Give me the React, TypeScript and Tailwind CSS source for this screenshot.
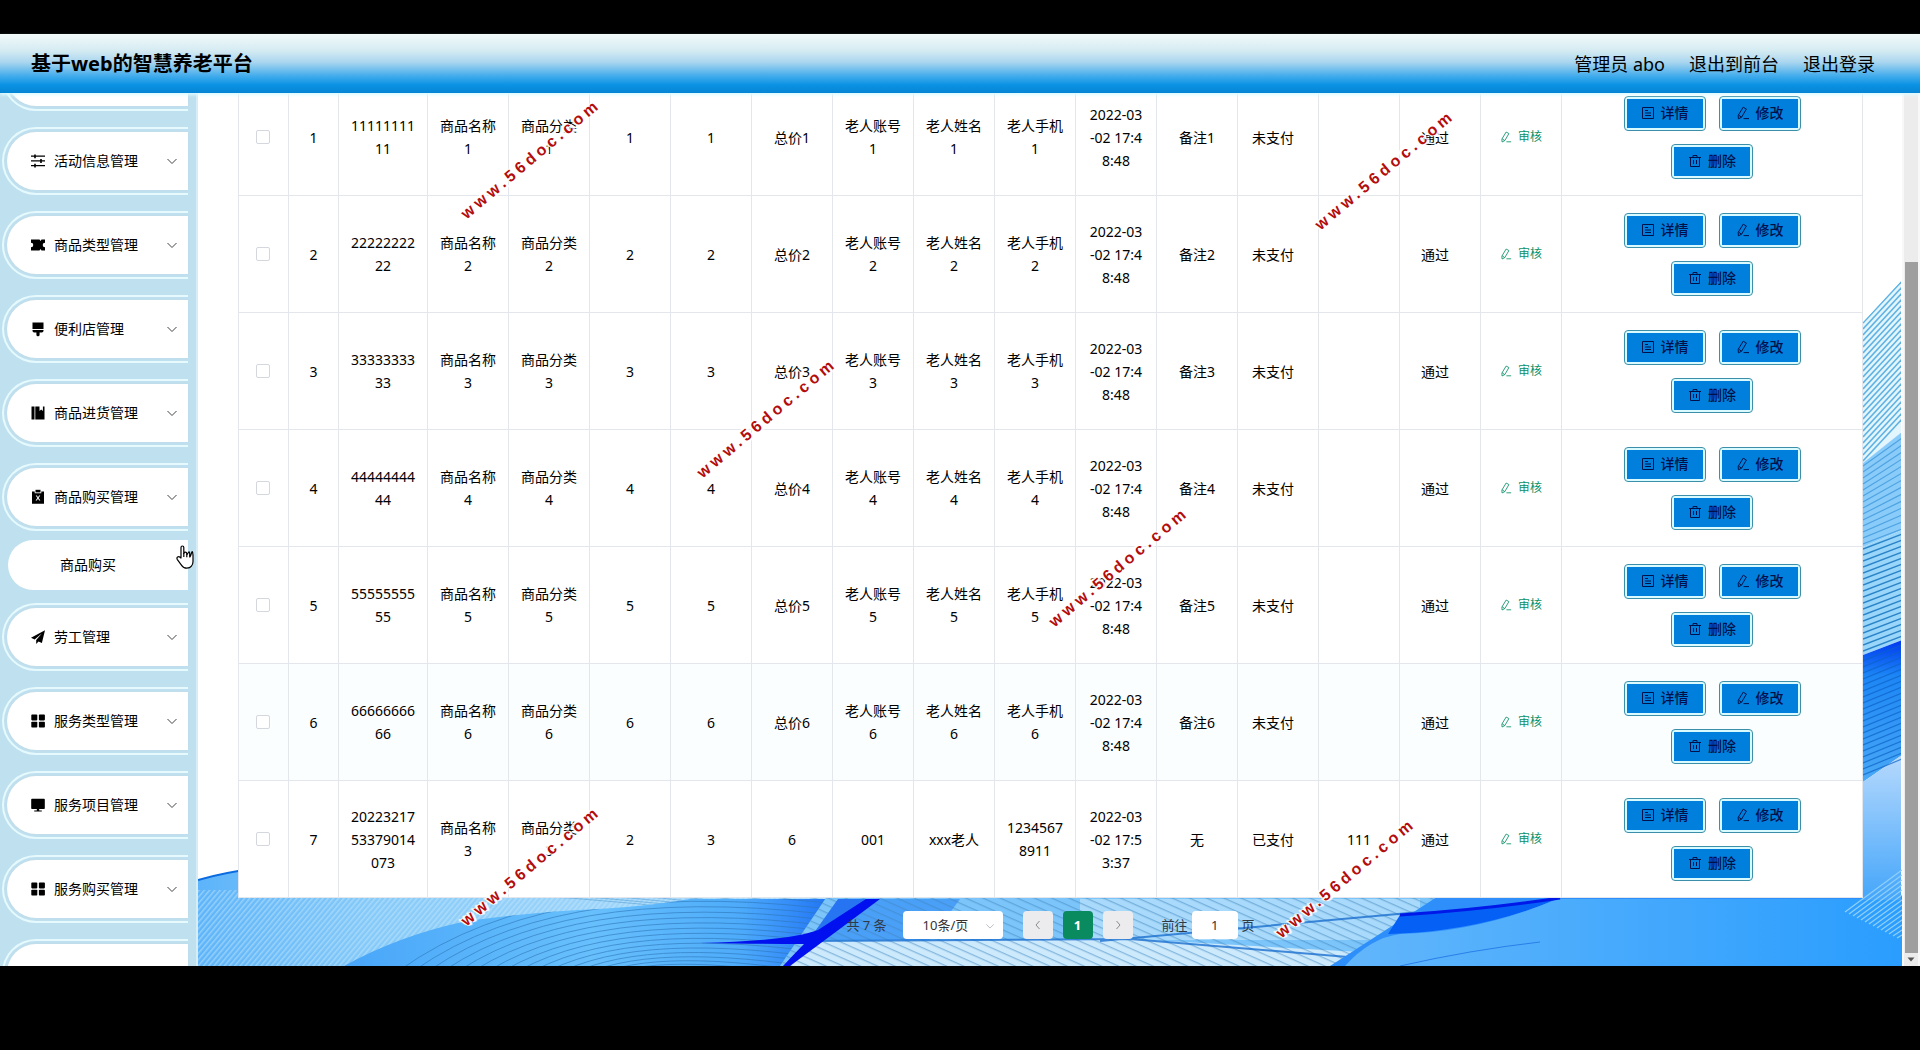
import React from 'react';

interface Purchase {
  orderNo: string;
  name: string;
  category: string;
  price: string;
  count: string;
  total: string;
  account: string;
  elder: string;
  phone: string;
  time: string;
  remark: string;
  paid: string;
  reply: string;
  status: string;
}

interface MenuEntry {
  label: string;
  icon: React.ReactNode;
  children?: string[];
}

const samplePurchase = (n: number): Purchase => ({
  orderNo: String(n).repeat(10),
  name: `商品名称${n}`,
  category: `商品分类${n}`,
  price: String(n),
  count: String(n),
  total: `总价${n}`,
  account: `老人账号${n}`,
  elder: `老人姓名${n}`,
  phone: `老人手机${n}`,
  time: '2022-03\n-02 17:4\n8:48',
  remark: `备注${n}`,
  paid: '未支付',
  reply: '',
  status: '通过',
});

const purchases: Purchase[] = [
  ...[1, 2, 3, 4, 5, 6].map(samplePurchase),
  {
    orderNo: '2022321753379014073',
    name: '商品名称3',
    category: '商品分类3',
    price: '2',
    count: '3',
    total: '6',
    account: '001',
    elder: 'xxx老人',
    phone: '12345678911',
    time: '2022-03\n-02 17:5\n3:37',
    remark: '无',
    paid: '已支付',
    reply: '111',
    status: '通过',
  },
];

const columns: (keyof Purchase)[] = [
  'orderNo', 'name', 'category', 'price', 'count', 'total', 'account',
  'elder', 'phone', 'time', 'remark', 'paid', 'reply', 'status',
];

/* Icons */
const MenuIcon = ({ children }: { children: React.ReactNode }) => (
  <svg viewBox="0 0 16 16" className="w-4 h-4 shrink-0" fill="currentColor" aria-hidden="true">{children}</svg>
);

const SlidersIcon = () => (
  <MenuIcon>
    <path d="M1 2.6h14v1.2H1zM1 7.3h14v1.2H1zM1 12h14v1.2H1z" />
    <path d="M4.2 1.4h1.6v3.8H4.2zM10.2 6.1h1.6v3.8h-1.6zM4.2 10.8h1.6v3.8H4.2z" />
  </MenuIcon>
);

const TicketIcon = () => (
  <MenuIcon>
    <path d="M1 2.5h8.5l1 1.4 1-1.4H15v3.2a2.3 2.3 0 0 0 0 4.6v3.2h-3.5l-1-1.4-1 1.4H1v-3.2a2.3 2.3 0 0 0 0-4.6z" />
  </MenuIcon>
);

const BrushIcon = () => (
  <MenuIcon>
    <path d="M2.5 1.5h11V8h-11zM2.5 9h11v.8q0 1.7-1.7 1.7H9.6v2.2a1.6 1.6 0 0 1-3.2 0v-2.2H4.2q-1.7 0-1.7-1.7z" />
  </MenuIcon>
);

const NotebookIcon = () => (
  <MenuIcon>
    <path d="M1.5 1.5h3v13h-3zM5.3 1.5h4.2V6l1.7-1.4L12.9 6V1.5h1.6v13H5.3z" />
  </MenuIcon>
);

const ClipboardIcon = () => (
  <MenuIcon>
    <path d="M5.5.8h5v2.6h-5z" />
    <path fillRule="evenodd" d="M2 2.4h2.7v1.8h6.6V2.4H14v12.4H2zM5.7 6.6 7.4 9l-1.8 2.6h1.2L8 9.8l1.2 1.8h1.2L8.6 9l1.7-2.4H9.1L8 8.2 6.9 6.6z" />
  </MenuIcon>
);

const PlaneIcon = () => (
  <MenuIcon>
    <path d="M15 1.2 1 8.8l3.6 1.6 7.2-6L6.2 11v3.9l2.3-2.4 3.4 1.5z" />
  </MenuIcon>
);

const GridIcon = () => (
  <MenuIcon>
    <rect x="1.3" y="1.6" width="6" height="5.8" rx=".8" />
    <rect x="8.9" y="1.6" width="6" height="5.8" rx=".8" />
    <rect x="1.3" y="8.8" width="6" height="5.8" rx=".8" />
    <rect x="8.9" y="8.8" width="6" height="5.8" rx=".8" />
  </MenuIcon>
);

const MonitorIcon = () => (
  <MenuIcon>
    <path d="M2 1.8h12q.8 0 .8.8v8.6q0 .8-.8.8H2q-.8 0-.8-.8V2.6q0-.8.8-.8zM6.8 12h2.4v1.4h2.6v1H4.2v-1h2.6z" />
  </MenuIcon>
);

const Chevron = ({ className, d = 'M1.5 4 6 8.5 10.5 4' }: { className: string; d?: string }) => (
  <svg viewBox="0 0 12 12" className={className} fill="none" stroke="currentColor" strokeWidth="1" aria-hidden="true">
    <path d={d} />
  </svg>
);

const DetailIcon = () => (
  <svg viewBox="0 0 14 14" className="w-3.5 h-3.5" fill="none" stroke="currentColor" strokeWidth="1" aria-hidden="true">
    <path d="M1.5 1.5h11v11h-11zM4 4.5h3M4 7h6M4 9.5h6" />
  </svg>
);

const EditIcon = ({ className }: { className: string }) => (
  <svg viewBox="0 0 14 14" className={className} fill="none" stroke="currentColor" strokeWidth="1" aria-hidden="true">
    <path d="M7.2 1.2 10.4 3 5.6 11.2 2.4 12.8 2.2 9.4zM2.6 9.2 5.6 11.2M7.5 12.6H13" />
  </svg>
);

const TrashIcon = () => (
  <svg viewBox="0 0 14 14" className="w-3.5 h-3.5" fill="none" stroke="currentColor" strokeWidth="1" aria-hidden="true">
    <path d="M1 3.5h12M2.5 3.5v9h9v-9M5 3.5v-2h4v2M5.5 6v4M8.5 6v4" />
  </svg>
);

const menu: MenuEntry[] = [
  { label: '', icon: null },
  { label: '活动信息管理', icon: <SlidersIcon /> },
  { label: '商品类型管理', icon: <TicketIcon /> },
  { label: '便利店管理', icon: <BrushIcon /> },
  { label: '商品进货管理', icon: <NotebookIcon /> },
  { label: '商品购买管理', icon: <ClipboardIcon />, children: ['商品购买'] },
  { label: '劳工管理', icon: <PlaneIcon /> },
  { label: '服务类型管理', icon: <GridIcon /> },
  { label: '服务项目管理', icon: <MonitorIcon /> },
  { label: '服务购买管理', icon: <GridIcon /> },
  { label: '', icon: null },
];

const Sidebar = () => (
  <nav className="w-[198px] shrink-0 overflow-hidden bg-[#bfe0ef] border-r-2 border-[#d6edf6] pl-0.5">
    <ul className="-mt-[50px]">
      {menu.map((entry, i) => (
        <li key={i}>
          <div className={`w-[186px] h-[68px] border-2 border-r-0 border-[#e6fafe] rounded-l-[34px] p-[3px] pr-0 ${entry.children ? 'mb-[9px]' : 'mb-4'}`}>
            <button
              aria-label={entry.label || '菜单'}
              className="w-full h-full flex items-center rounded-l-[30px] bg-white pl-[23px] pr-2.5 text-sm text-black shadow-[0_0_2px_#c3d3e0]"
            >
              {entry.label && (
                <>
                  {entry.icon}
                  <span className="ml-2 flex-1 text-left">{entry.label}</span>
                  <Chevron className="w-3 h-3 text-[#444]" />
                </>
              )}
            </button>
          </div>
          {entry.children?.map(child => (
            <a key={child} href="#" className="ml-1.5 mb-[13px] w-[180px] h-[50px] flex items-center rounded-l-[25px] bg-white pl-[52px] text-sm text-black">
              {child}
            </a>
          ))}
        </li>
      ))}
    </ul>
  </nav>
);

/* Blue wave wallpaper behind the table */
const range = (n: number) => Array.from({ length: n }, (_, i) => i);

const Wallpaper = () => (
  <svg viewBox="198 93 1704 873" preserveAspectRatio="none" className="absolute inset-0 w-full h-full" aria-hidden="true">
    <defs>
      <pattern id="hatch" width="4" height="4" patternUnits="userSpaceOnUse" patternTransform="rotate(40)">
        <rect width="1.5" height="4" fill="#c9e9fc" opacity=".5" />
      </pattern>
      <pattern id="rain" width="7" height="7" patternUnits="userSpaceOnUse" patternTransform="rotate(24)">
        <rect width="7" height="1.3" fill="#3f86bd" opacity=".5" />
      </pattern>
      <linearGradient id="leftWave" x1="0" y1="0" x2="1" y2="0">
        <stop offset="0" stopColor="#5db4fa" />
        <stop offset=".25" stopColor="#86caf9" />
        <stop offset="1" stopColor="#b8e0fb" />
      </linearGradient>
      <linearGradient id="midWave" x1="0" y1="0" x2="1" y2="0">
        <stop offset="0" stopColor="#49a6f9" />
        <stop offset=".5" stopColor="#68c0fc" />
        <stop offset=".8" stopColor="#4eabfb" />
        <stop offset="1" stopColor="#1c6ff5" />
      </linearGradient>
      <linearGradient id="rightWave" x1="0" y1="0" x2="0" y2="1">
        <stop offset="0" stopColor="#0038f0" />
        <stop offset=".25" stopColor="#1c86f5" />
        <stop offset="1" stopColor="#4aa9f6" />
      </linearGradient>
      <linearGradient id="rightFade" x1="0" y1="0" x2="0" y2="1">
        <stop offset="0" stopColor="#b6d9fd" />
        <stop offset="1" stopColor="#45a6fa" />
      </linearGradient>
      <linearGradient id="corner" x1="0" y1="0" x2="1" y2="0">
        <stop offset="0" stopColor="#62b6fb" />
        <stop offset="1" stopColor="#2a9dfe" />
      </linearGradient>
      <clipPath id="arcs"><path d="M344 966Q400 935 467 921 540 911 600 909 650 906 690 899H840L790 966z" /></clipPath>
      <clipPath id="edge"><path d="M1863 322 1901 281V966H1863z" /></clipPath>
    </defs>
    <rect x="198" y="93" width="1704" height="873" fill="#fff" />

    {/* left and middle waves */}
    <path d="M198 880Q225 872 260 868L900 880V966H198z" fill="url(#leftWave)" />
    <path d="M198 880Q225 872 260 868" stroke="#0a6be0" strokeWidth="2" fill="none" />
    <rect x="198" y="890" width="640" height="76" fill="url(#hatch)" />
    {range(9).map(i => (
      <path key={i} d={`M${500 + i * 36} 895Q${640 + i * 24} 898 ${780 + i * 16} 925`} stroke="#4a93cc" fill="none" opacity=".5" />
    ))}
    <path d="M344 966Q400 935 467 921 540 911 600 909 650 906 690 899H840L790 966z" fill="url(#midWave)" />
    <g clipPath="url(#arcs)" fill="none" stroke="#2d76b8" strokeWidth="1" opacity=".6">
      {range(26).map(i => (
        <path key={i} d={`M${400 + i * 15} 970Q${550 + i * 10} ${862 + i * 6} ${850 + i * 2} ${900 + i * 6}`} />
      ))}
    </g>

    {/* stripes behind the pager */}
    <path d="M838 880H1700V966H780z" fill="#7cc5fa" />
    <path d="M1080 899H1420V940H1080z" fill="#a9dafb" />
    <path d="M850 899H960L930 940H815z" fill="#4a9ff7" />
    <path d="M815 941 1130 939 1360 952 1330 966H785z" fill="#cdeafd" />
    <path d="M838 880H1440V966H780z" fill="url(#rain)" />
    <path d="M815 941 1130 939 1360 958M1100 941 1420 912" stroke="#1c6fd0" strokeWidth="2" fill="none" opacity=".8" />
    <path d="M838 899H872L806 944z" fill="#2674f2" />
    <path d="M866 899H880L790 966H783Q798 950 804 944 760 944 700 943 790 941 818 930z" fill="#0010ee" />
    <path d="M1330 966 1440 895H1902V966z" fill="#2f8ffa" />
    <path d="M1400 915Q1480 910 1560 898 1480 932 1388 934z" fill="#0560f5" />
    <path d="M1345 966Q1370 938 1400 934 1480 932 1557 899H1902V966z" fill="url(#corner)" />
    <path d="M1400 915Q1480 910 1560 898" stroke="#0018e8" strokeWidth="3" fill="none" />
    <path d="M1400 966Q1470 950 1540 942" stroke="#2a7fe8" strokeWidth="1" fill="none" />

    {/* right edge */}
    <g clipPath="url(#edge)">
      <path d="M1863 322 1902 280V440L1863 463z" fill="#e3f5fd" />
      <path d="M1863 463 1902 432V530L1863 547z" fill="#8accf9" />
      <path d="M1863 547 1902 530V640L1863 655z" fill="#9ad6f9" />
      <path d="M1863 655 1902 640V755L1863 782z" fill="url(#rightWave)" />
      <path d="M1863 782 1902 755V900H1863z" fill="url(#rightFade)" />
      {range(24).map(i => (
        <path key={i} d={`M1863 ${323 + i * 6}L1902 ${281 + i * 6}`} stroke="#5fb2e2" strokeWidth="1.6" />
      ))}
      {range(14).map(i => (
        <path key={i} d={`M1863 ${466 + i * 6}L1902 ${438 + i * 7}`} stroke="#4fa3e2" strokeWidth="1.2" />
      ))}
      {range(18).map(i => (
        <path key={i} d={`M1863 ${549 + i * 6}L1902 ${534 + i * 6}`} stroke="#2a84c8" strokeWidth="1.4" />
      ))}
      {range(20).map(i => (
        <path key={i} d={`M1863 ${661 + i * 6}L1902 ${645 + i * 6}`} stroke="#0c62c8" strokeWidth="1.2" opacity=".7" />
      ))}
    </g>
    {range(14).map(i => (
      <path key={i} d={`M${1845 + i * 4} ${912 + i * 2}L1902 ${870 + i * 5}`} stroke="#8fd0fb" strokeWidth="1.2" />
    ))}
  </svg>
);

const actionClass =
  'w-[82px] h-[35px] rounded border border-[#3c8fa8] bg-[#d9fbff] p-[2px] text-sm font-medium text-[#00104a]';
const actionInner = 'w-full h-full flex items-center justify-center gap-1.5 bg-[#0080dc]';

const PurchaseTable = () => (
  <table className="w-full table-fixed border-collapse bg-white text-sm leading-[23px] text-black text-center shrink-0">
    <colgroup>
      <col className="w-[50px]" />
      <col className="w-[50px]" />
      <col className="w-[89px]" />
      {range(14).map(i => <col key={i} className="w-[81px]" />)}
      <col />
    </colgroup>
    <tbody>
      {purchases.map((row, i) => (
        <tr key={row.orderNo} className={`h-[117px] ${i === 5 ? 'bg-[#fbfeff]' : ''}`}>
          <td className="border border-[#e3e7ec] p-0 pr-0.5">
            <input
              type="checkbox"
              aria-label={`选择第${i + 1}行`}
              className="appearance-none block mx-auto w-3.5 h-3.5 bg-white border border-[#d4d7dd] rounded-xs"
            />
          </td>
          <td className="border border-[#e3e7ec] p-0">{i + 1}</td>
          {columns.map(key => (
            <td
              key={key}
              className={`border border-[#e3e7ec] py-0 break-all whitespace-pre-line ${key === 'paid' || key === 'status' ? 'pl-2.5 pr-5' : 'px-2.5'}`}
            >
              {row[key]}
            </td>
          ))}
          <td className="border border-[#e3e7ec] p-0">
            <button className="inline-flex items-center gap-1.5 text-xs text-[#0d9068]">
              <EditIcon className="w-3 h-3" />
              审核
            </button>
          </td>
          <td className="border border-[#e3e7ec] p-0">
            <div className="w-[240px] mx-auto flex flex-wrap justify-center gap-[13px]">
              <button className={actionClass}><span className={actionInner}><DetailIcon />详情</span></button>
              <button className={actionClass}><span className={actionInner}><EditIcon className="w-3.5 h-3.5" />修改</span></button>
              <button className={actionClass}><span className={actionInner}><TrashIcon />删除</span></button>
            </div>
          </td>
        </tr>
      ))}
    </tbody>
  </table>
);

const Pager = () => (
  <div className="h-[68px] shrink-0 flex items-start justify-center pt-[13px] text-[13px] leading-7 text-[#303a46]">
    <span className="mr-4">共 7 条</span>
    <div className="relative">
      <select aria-label="每页条数" className="appearance-none block w-[100px] h-7 rounded-sm bg-white pl-5 text-[13px] text-[#333]">
        <option>10条/页</option>
      </select>
      <Chevron className="absolute right-2 top-2.5 w-2.5 h-2.5 text-[#b0b4bc]" />
    </div>
    <button aria-label="上一页" className="ml-5 w-[30px] h-7 flex items-center justify-center rounded-sm bg-[#ececee] text-[#8a8a8a]">
      <Chevron className="w-3 h-3" d="M7.5 2 4 6 7.5 10" />
    </button>
    <button className="ml-2.5 w-[30px] h-7 rounded-sm bg-[#0a8a5f] text-white font-bold">1</button>
    <button aria-label="下一页" className="ml-2.5 w-[30px] h-7 flex items-center justify-center rounded-sm bg-[#ececee] text-[#8a8a8a]">
      <Chevron className="w-3 h-3" d="M4.5 2 8 6 4.5 10" />
    </button>
    <label className="ml-[29px] flex items-center">
      前往
      <input type="text" defaultValue="1" className="mx-1 w-[46px] h-7 rounded-sm bg-white text-center text-[13px] text-[#333]" />
      页
    </label>
  </div>
);

const watermarks = [
  'left-[441px] top-[147px]',
  'left-[1295px] top-[158px]',
  'left-[677px] top-[406px]',
  'left-[1029px] top-[555px]',
  'left-[441px] top-[854px]',
  'left-[1256px] top-[866px]',
];

const Watermarks = () => (
  <div className="absolute inset-0 overflow-hidden pointer-events-none">
    {watermarks.map(place => (
      <div
        key={place}
        className={`absolute ${place} w-[180px] h-6 text-center whitespace-nowrap -rotate-[40deg] font-['Liberation_Sans',sans-serif] text-base leading-6 font-bold tracking-[4px] text-[#b30d0d] [text-shadow:1px_0_#fff,-1px_0_#fff,0_1px_#fff,0_-1px_#fff,2px_2px_1px_#fff,-2px_-2px_1px_#fff]`}
      >
        www.56doc.com
      </div>
    ))}
  </div>
);

const HandPointer = () => (
  <svg viewBox="0 0 18 24" className="absolute left-[176px] top-[545px] w-[18px] h-6" fill="#fff" stroke="#000" strokeWidth="1.2" strokeLinejoin="round" aria-hidden="true">
    <path d="M5 13V2.4Q5 1 6.4 1T7.8 2.4V8.5Q7.9 7.2 9.3 7.2T10.8 8.7 12.2 7.7 13.8 9.4 15.3 8.7 17 10.4V16.5Q17 19.5 15.4 21.2 14 23.2 10.8 23.2 7.4 23.2 5.6 20.4L1.4 14.6Q.4 13 1.6 12.1T4 12.2z" />
    <path d="M7.8 8v4M10.8 8.7v3.5M13.8 9.4v3" fill="none" />
  </svg>
);

const App: React.FC = () => {
  return (
    <div className="relative h-screen flex flex-col bg-black pt-[34px] pb-[84px] overflow-hidden font-['Noto_Sans','Noto_Sans_CJK_SC',sans-serif]">
      <header className="relative z-10 h-[59px] shrink-0 flex items-center justify-between pl-[31px] pr-[45px] text-black bg-[linear-gradient(180deg,#f2fafa_0%,#d5ebf2_28%,#a9d6ef_48%,#47aeec_70%,#0b93e4_86%,#0584d4_100%)] shadow-[0_2px_3px_#dcfbff]">
        <h1 className="text-xl font-bold">基于web的智慧养老平台</h1>
        <div className="flex items-center gap-6 text-lg">
          <span>管理员 abo</span>
          <a href="#">退出到前台</a>
          <a href="#">退出登录</a>
        </div>
      </header>

      <div className="flex-1 min-h-0 flex">
        <Sidebar />
        <main className="relative flex-1 min-w-0 overflow-hidden">
          <Wallpaper />
          <div className="relative h-full flex flex-col justify-end pl-10 pr-[39px]">
            <PurchaseTable />
            <Pager />
          </div>
        </main>

        {/* Page scrollbar */}
        <div className="w-[18px] shrink-0 flex flex-col items-center bg-[#ececec] border-x-2 border-[#f8f8f8] pt-[169px]">
          <div className="w-[13px] flex-1 bg-[#9f9f9f]" />
          <svg viewBox="0 0 14 13" className="w-3.5 h-[13px] shrink-0" aria-hidden="true">
            <path d="M3.5 4.5h7L7 8.5z" fill="#555" />
          </svg>
        </div>
      </div>

      <Watermarks />
      <HandPointer />
    </div>
  );
};

export default App;
